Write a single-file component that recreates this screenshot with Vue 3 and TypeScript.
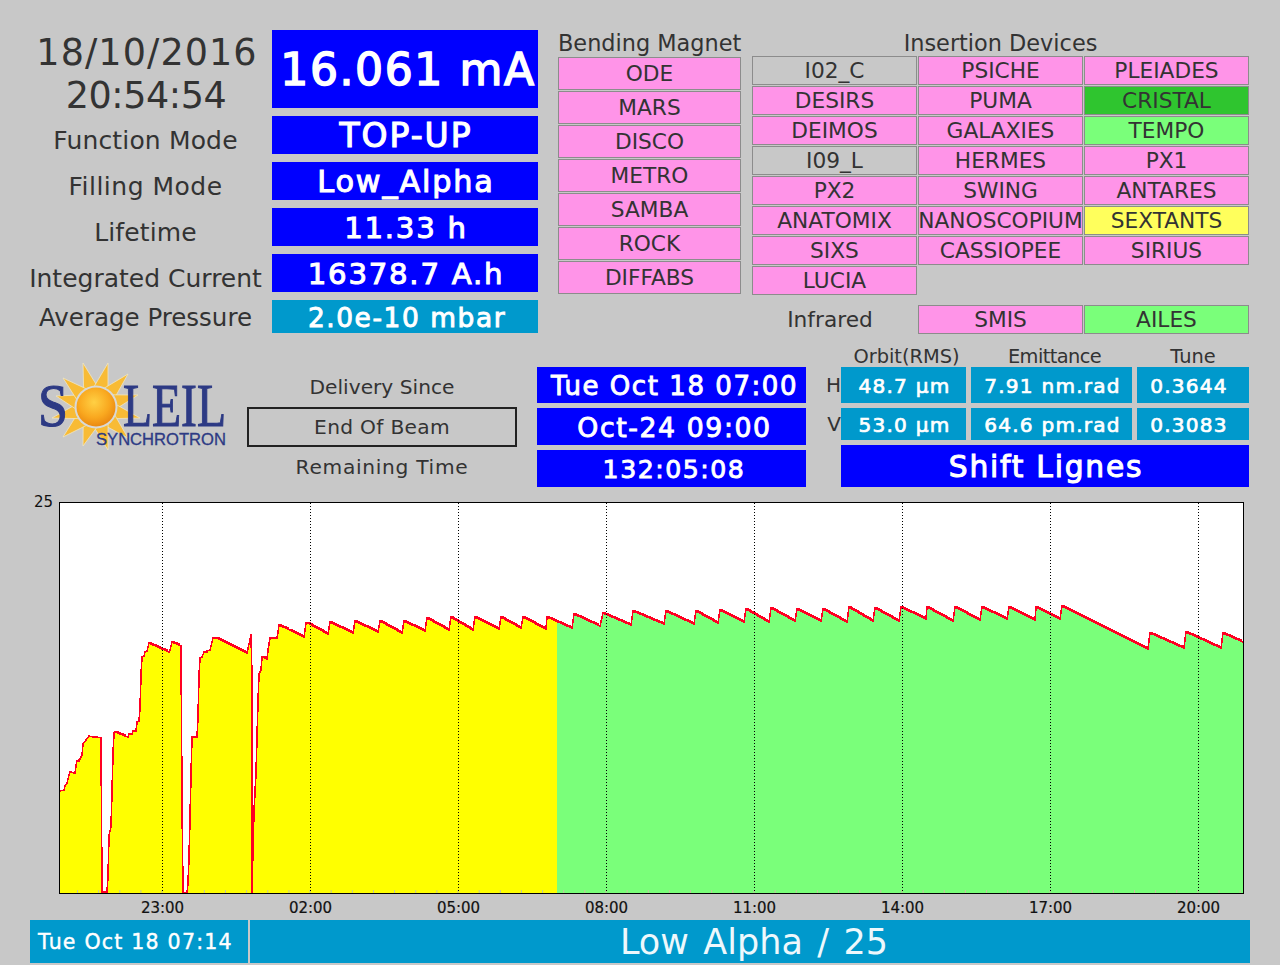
<script setup lang="ts">
type Tone = 'pink' | 'grey' | 'green' | 'dark' | 'yellow'
interface Beamline { name: string; tone: Tone }

const statusRows = [
  { label: 'Function Mode', value: 'TOP-UP', cls: 'v-mode' },
  { label: 'Filling Mode', value: 'Low_Alpha', cls: 'v-fill' },
  { label: 'Lifetime', value: '11.33 h', cls: 'v-life' },
  { label: 'Integrated Current', value: '16378.7 A.h', cls: 'v-int' }
]

const bending = ['ODE', 'MARS', 'DISCO', 'METRO', 'SAMBA', 'ROCK', 'DIFFABS']

const insertion: Beamline[] = [
  { name: 'I02_C', tone: 'grey' }, { name: 'PSICHE', tone: 'pink' }, { name: 'PLEIADES', tone: 'pink' },
  { name: 'DESIRS', tone: 'pink' }, { name: 'PUMA', tone: 'pink' }, { name: 'CRISTAL', tone: 'dark' },
  { name: 'DEIMOS', tone: 'pink' }, { name: 'GALAXIES', tone: 'pink' }, { name: 'TEMPO', tone: 'green' },
  { name: 'I09_L', tone: 'grey' }, { name: 'HERMES', tone: 'pink' }, { name: 'PX1', tone: 'pink' },
  { name: 'PX2', tone: 'pink' }, { name: 'SWING', tone: 'pink' }, { name: 'ANTARES', tone: 'pink' },
  { name: 'ANATOMIX', tone: 'pink' }, { name: 'NANOSCOPIUM', tone: 'pink' }, { name: 'SEXTANTS', tone: 'yellow' },
  { name: 'SIXS', tone: 'pink' }, { name: 'CASSIOPEE', tone: 'pink' }, { name: 'SIRIUS', tone: 'pink' },
  { name: 'LUCIA', tone: 'pink' }
]

// current trace, in page pixels
const trace: number[][] = [
  [60, 791], [64, 790], [65, 786], [67, 783], [69, 775], [70, 772], [75, 773], [76, 766], [77, 761], [80, 759],
  [82, 755], [83, 744], [86, 740], [89, 736], [93, 737], [97, 737], [101, 738], [102, 892], [107, 892], [108, 877],
  [109, 835], [111, 827], [112, 792], [113, 754], [114, 733], [115, 732], [128, 737], [129, 734], [132, 734],
  [133, 731], [136, 731], [137, 722], [139, 721], [140, 709], [141, 675], [142, 657], [144, 656], [145, 652],
  [147, 651], [149, 643], [169, 652], [170, 650], [172, 642], [181, 646], [182, 800], [183, 893], [187, 893],
  [188, 883], [189, 858], [190, 818], [191, 775], [192, 737], [197, 737], [198, 717], [199, 676], [200, 658],
  [202, 657], [204, 652], [210, 650], [212, 642], [213, 638], [217, 638], [247, 653], [248, 648], [250, 640],
  [251, 634], [252, 678], [252, 893], [253, 848], [254, 811], [256, 773], [257, 737], [258, 702], [259, 674],
  [261, 670], [262, 657], [267, 659], [268, 650], [270, 638], [277, 638], [278, 632], [279, 625], [290, 630],
  [304, 637], [306, 623], [308, 623], [328, 634], [330, 622], [353, 633], [355, 621], [378, 632], [380, 621],
  [402, 633], [404, 621], [425, 631], [427, 618], [449, 630], [451, 617], [473, 630], [475, 617], [499, 629],
  [501, 617], [521, 628], [523, 617], [546, 629], [547, 617], [572, 628], [574, 614], [600, 626], [603, 613],
  [631, 625], [633, 611], [664, 624], [666, 611], [694, 624], [696, 611], [718, 623], [720, 610], [744, 622],
  [746, 609], [769, 622], [771, 608], [795, 621], [797, 609], [821, 621], [823, 609], [847, 622], [849, 607],
  [873, 621], [875, 608], [899, 621], [901, 607], [926, 619], [927, 607], [953, 621], [955, 607], [980, 620],
  [982, 607], [1007, 619], [1009, 607], [1035, 620], [1036, 607], [1060, 619], [1062, 606], [1148, 649],
  [1150, 633], [1184, 648], [1186, 632], [1221, 648], [1223, 633], [1243, 642]
]

// the recorder draws one-pixel stairs on the slow decays
const stepped: number[][] = []
trace.forEach(([x, y], i) => {
  const prev = trace[i - 1]
  if (prev) {
    const dx = x - prev[0]
    const dy = y - prev[1]
    const n = Math.abs(dy)
    if (dx > n && n > 0) {
      for (let k = 1; k < n; k++) {
        const sx = Math.round(prev[0] + (dx * k) / n)
        stepped.push([sx, prev[1] + Math.sign(dy) * (k - 1)], [sx, prev[1] + Math.sign(dy) * k])
      }
    }
  }
  stepped.push([x, y])
})
const tracePoints = stepped.map(p => p.join(',')).join(' ')
const areaPoints = `60,893 ${tracePoints} 1243,893`

const hours = ['23:00', '02:00', '05:00', '08:00', '11:00', '14:00', '17:00', '20:00']
const gridX = hours.map((_, i) => 162.5 + i * 148)
const minorTicks = Array.from({ length: 56 }, (_, i) => 77.5 + i * 21.14)

// sun rays: tips around the disc of the logo
const sun = { x: 96, y: 407 }
const rayTips = [
  [83, 363], [108, 363], [128, 374], [138, 395], [140, 418], [128, 438],
  [108, 450], [83, 446], [63, 437], [52, 418], [56, 396], [63, 378]
]
const rays = rayTips.map(([x, y]) => {
  const a = Math.atan2(y - sun.y, x - sun.x)
  const r = 19
  const p = (d: number) => `${(sun.x + r * Math.cos(a + d)).toFixed(1)},${(sun.y + r * Math.sin(a + d)).toFixed(1)}`
  return `${x},${y} ${p(0.42)} ${p(-0.42)}`
})
</script>

<template>
  <div class="screen">
    <section class="top">
      <div class="status">
        <div class="clock">
          <div class="clock-date">18/10/2016</div>
          <div class="clock-time">20:54:54</div>
        </div>
        <div class="value v-current">16.061 mA</div>
        <template v-for="row in statusRows" :key="row.label">
          <div class="status-label shifted" :class="`l-${row.cls}`">{{ row.label }}</div>
          <div class="value" :class="row.cls">{{ row.value }}</div>
        </template>
        <div class="status-label l-press">Average Pressure</div>
        <div class="value cyan v-press">2.0e-10 mbar</div>
      </div>

      <div class="bending">
        <h2 class="group-title">Bending Magnet</h2>
        <div class="bending-list">
          <div v-for="name in bending" :key="name" class="line tall pink">{{ name }}</div>
        </div>
      </div>

      <div class="insertion">
        <h2 class="group-title narrow">Insertion Devices</h2>
        <div class="insertion-grid">
          <div v-for="item in insertion" :key="item.name" class="line" :class="item.tone">{{ item.name }}</div>
        </div>
        <div class="insertion-grid infrared">
          <div class="infrared-label">Infrared</div>
          <div class="line pink">SMIS</div>
          <div class="line green">AILES</div>
        </div>
      </div>
    </section>

    <section class="middle">
      <svg class="logo" viewBox="36 360 192 92" width="192" height="92" role="img" aria-label="Soleil Synchrotron">
        <defs>
          <radialGradient id="sun-disc" cx="45%" cy="38%" r="65%">
            <stop offset="0" stop-color="#ffd044" />
            <stop offset="0.6" stop-color="#f9a81f" />
            <stop offset="1" stop-color="#e9850f" />
          </radialGradient>
        </defs>
        <polygon v-for="(ray, i) in rays" :key="i" :points="ray" fill="#f8bb35" stroke="#efe6c4" stroke-width="0.8" />
        <circle :cx="sun.x" :cy="sun.y" r="21.5" fill="#d9d9d6" />
        <circle :cx="sun.x" :cy="sun.y" r="19.5" fill="url(#sun-disc)" />
        <text x="38" y="426" class="logo-big" textLength="30" lengthAdjust="spacingAndGlyphs">S</text>
        <text x="123" y="426" class="logo-big" textLength="103" lengthAdjust="spacingAndGlyphs">LEIL</text>
        <text x="96" y="445" class="logo-small" textLength="130" lengthAdjust="spacingAndGlyphs">SYNCHROTRON</text>
      </svg>

      <div class="delivery">
        <div class="delivery-label">Delivery Since</div>
        <div class="delivery-box">End Of Beam</div>
        <div class="delivery-label wide">Remaining Time</div>
      </div>

      <div class="times">
        <div class="value t-since">Tue Oct 18 07:00</div>
        <div class="value t-end">Oct-24 09:00</div>
        <div class="value t-left">132:05:08</div>
      </div>

      <div class="beam">
        <span></span>
        <div class="beam-head off">Orbit(RMS)</div>
        <div class="beam-head off tight">Emittance</div>
        <div class="beam-head">Tune</div>
        <div class="plane">H</div>
        <div class="value cyan cell">48.7 µm</div>
        <div class="value cyan cell">7.91 nm.rad</div>
        <div class="value cyan cell tune">0.3644</div>
        <div class="plane">V</div>
        <div class="value cyan cell">53.0 µm</div>
        <div class="value cyan cell">64.6 pm.rad</div>
        <div class="value cyan cell tune">0.3083</div>
        <div class="value shift">Shift Lignes</div>
      </div>
    </section>

    <section class="chart">
      <div class="plot-row">
        <div class="y-max">25</div>
        <svg class="plot" viewBox="59 502 1185 392" width="1185" height="392">
          <defs>
            <clipPath id="run-before"><rect x="59" y="502" width="498" height="392" /></clipPath>
            <clipPath id="run-after"><rect x="557" y="502" width="687" height="392" /></clipPath>
          </defs>
          <polygon :points="areaPoints" fill="#ffff00" clip-path="url(#run-before)" />
          <polygon :points="areaPoints" fill="#7aff7a" clip-path="url(#run-after)" />
          <line v-for="x in minorTicks" :key="x" :x1="x" :x2="x" y1="890" y2="893" stroke="#c4c4a0" />
          <polyline :points="tracePoints" fill="none" stroke="#ff0022" stroke-width="1.6" shape-rendering="crispEdges" />
          <line v-for="x in gridX" :key="x" :x1="x" :x2="x" y1="503" y2="893" stroke="#000" stroke-dasharray="1 2" />
        </svg>
      </div>
      <div class="hours">
        <span v-for="h in hours" :key="h">{{ h }}</span>
      </div>
    </section>

    <footer class="foot">
      <div class="foot-date">Tue Oct 18 07:14</div>
      <div class="foot-msg">Low Alpha / 25</div>
    </footer>
  </div>
</template>

<style>
html, body { background: #c8c8c8; }
</style>

<style scoped>
.screen {
  width: 1280px; height: 965px; box-sizing: border-box; padding-top: 30px;
  background: #c8c8c8; color: #333; overflow: hidden;
  font-family: "DejaVu Sans", sans-serif;
}
.top { display: flex; align-items: flex-start; padding-left: 30px; height: 303px; }

.status {
  display: grid; grid-template-columns: 231px 266px; column-gap: 11px; row-gap: 8px;
  grid-template-rows: 78px 38px 38px 38px 38px 33px;
}
.clock {
  height: 78px; box-sizing: border-box; padding: 1px 0 0 3px;
  font-size: 36.5px; line-height: 43px; text-align: center; white-space: nowrap;
}
.clock-date { letter-spacing: 1.1px; }
.clock-time { letter-spacing: -0.4px; padding-right: 2px; }
.status-label {
  display: flex; align-items: center; justify-content: center; white-space: nowrap;
  font-size: 25px; line-height: 30px;
}
.status-label.shifted { padding-top: 12px; letter-spacing: 0.15px; }
.status-label.l-v-fill { letter-spacing: 0.5px; }
.status-label.l-v-int { letter-spacing: 0; }
.status-label.l-press { font-size: 24.5px; padding-top: 2px; }

.value {
  display: flex; align-items: center; justify-content: center; white-space: nowrap;
  background: #0000ff; color: #fff; padding: 1px 0 0 2px; box-sizing: border-box;
  letter-spacing: 0.06em; -webkit-text-stroke: 0.035em #fff;
}
.cyan { background: #0099cc; }
.v-current { font-size: 44px; letter-spacing: 1.6px; padding-left: 6px; }
.v-mode { font-size: 33px; }
.v-fill { font-size: 30.3px; }
.v-life, .v-int { font-size: 29.2px; }
.v-press { font-size: 26.4px; padding-left: 4px; }

.bending { width: 183px; margin-left: 20px; }
.group-title {
  margin: 0; height: 27px; font-size: 22.4px; font-weight: 400; line-height: 27px;
  text-align: center; white-space: nowrap;
}
.group-title.narrow { height: 26px; line-height: 26px; }
.bending-list { display: grid; row-gap: 1px; }
.line {
  display: flex; align-items: center; justify-content: center; box-sizing: border-box;
  height: 29px; border: 1px solid #8c8c8c; font-size: 21.7px; white-space: nowrap; overflow: hidden;
}
.line.tall { height: 33px; }
.pink { background: #ff94e8; }
.grey { background: #c8c8c8; }
.green { background: #7aff7a; }
.dark { background: #2fc52f; }
.yellow { background: #ffff5c; }

.insertion { width: 497px; margin-left: 11px; }
.insertion-grid { display: grid; grid-template-columns: repeat(3, 165px); gap: 1px; }
.infrared { margin-top: 10px; }
.infrared-label {
  display: flex; align-items: center; justify-content: center; padding-right: 9px;
  font-size: 21.7px; white-space: nowrap;
}

.middle { display: flex; align-items: flex-start; height: 142px; margin-top: 12px; padding-left: 36px; }
.logo { display: block; margin-top: 15px; flex: none; }
.logo-big { font-family: "Liberation Serif", serif; font-size: 62px; fill: #2d3a84; stroke: #2d3a84; stroke-width: 1.1px; }
.logo-small { font-family: "Liberation Sans", sans-serif; font-size: 16px; fill: #2d3a84; stroke: #2d3a84; stroke-width: 0.3px; }

.delivery { width: 270px; margin: 22px 0 0 19px; display: grid; grid-template-rows: repeat(3, 40px); }
.delivery-label, .delivery-box {
  display: flex; align-items: center; justify-content: center; font-size: 20.2px; white-space: nowrap;
}
.delivery-label.wide { letter-spacing: 0.7px; }
.delivery-box { box-sizing: border-box; border: 2px solid #222; letter-spacing: 0.3px; }

.times { width: 269px; margin: 22px 0 0 20px; display: grid; grid-template-rows: 36px 37px 37px; row-gap: 5px; }
.t-since { font-size: 26px; padding-left: 6px; }
.t-end { font-size: 26.7px; padding-left: 6px; }
.t-left { font-size: 25.2px; padding-left: 5px; }

.beam {
  margin-left: 15px; display: grid; grid-template-columns: 15px 125px 161px 112px; column-gap: 5px;
  grid-template-rows: 17px 36px 32px 42px; row-gap: 5px;
}
.beam-head {
  display: flex; align-items: center; justify-content: center; font-size: 19.4px; white-space: nowrap;
  height: 22px;
}
.beam-head.off { padding-left: 6px; }
.beam-head.tight { letter-spacing: -0.6px; }
.plane { display: flex; align-items: center; justify-content: flex-end; font-size: 20px; margin-right: -5px; }
.cell { font-size: 20.1px; }
.cell.tune { padding: 1px 8px 0 0; }
.shift { grid-column: 2 / 5; font-size: 29.7px; }

.chart { margin-top: 15px; }
.plot-row { display: flex; align-items: flex-start; padding-left: 34px; }
.y-max { width: 25px; margin-top: -7px; font-size: 15px; line-height: 15px; color: #111; }
.plot { display: block; flex: none; background: #fff; box-sizing: border-box; outline: 1px solid #000; outline-offset: -1px; }
.hours {
  display: grid; grid-template-columns: repeat(8, 148px); padding: 2px 0 0 88.5px; height: 26px; box-sizing: border-box;
  align-items: center; justify-items: center; font-size: 15px; color: #111;
  -webkit-text-stroke: 0.2px #111;
}

.foot { display: flex; gap: 2px; height: 43px; padding-left: 30px; }
.foot-date, .foot-msg { display: flex; align-items: center; background: #0099cc; color: #fff; white-space: nowrap; }
.foot-date {
  width: 218px; box-sizing: border-box; padding-left: 8px; font-size: 20.5px;
  letter-spacing: 0.06em; -webkit-text-stroke: 0.02em #fff;
}
.foot-msg { width: 1000px; box-sizing: border-box; padding-left: 8px; justify-content: center; font-size: 35px; color: #eef8fc; word-spacing: 3.3px; }
</style>
